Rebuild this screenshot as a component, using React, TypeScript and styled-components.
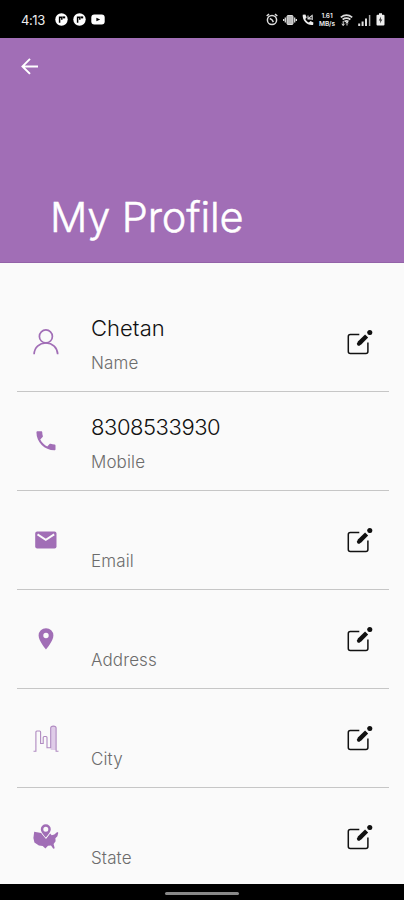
import React from "react";
import styled, { createGlobalStyle } from "styled-components";

const PURPLE = "#a16eb6";

const GlobalStyle = createGlobalStyle`
  * { box-sizing: border-box; }
  body { margin: 0; background: #fafafa; font-family: Inter, Roboto, sans-serif; }
  svg { display: block; flex: none; }
`;

const Screen = styled.div`
  width: 404px;
  height: 900px;
  display: flex;
  flex-direction: column;
  overflow: hidden;
  background: #fafafa;
`;

const StatusBar = styled.div`
  height: 38px;
  flex: none;
  display: flex;
  align-items: center;
  justify-content: space-between;
  padding: 1px 19px 0 21px;
  background: #000;
  color: #eee;
`;

const StatusGroup = styled.div<{ $gap: number }>`
  display: flex;
  align-items: center;
  gap: ${(p) => p.$gap}px;
`;

const Clock = styled.span`
  width: 28px;
  font-size: 13px;
  line-height: 16px;
  letter-spacing: -0.4px;
  white-space: nowrap;
`;

const NetSpeed = styled.span`
  width: 16px;
  display: flex;
  flex-direction: column;
  align-items: center;
  font-size: 6.5px;
  font-weight: 600;
  line-height: 8px;
  letter-spacing: -0.1px;
`;

const Header = styled.header`
  height: 225px;
  flex: none;
  display: flex;
  flex-direction: column;
  justify-content: space-between;
  padding: 18px 20px 20px;
  background: ${PURPLE};
  border-bottom: 1px solid #9362a8;
`;

const BackButton = styled.button`
  width: 20px;
  height: 20px;
  padding: 0;
  border: 0;
  background: none;
  color: #fff;
`;

const Title = styled.h1`
  margin: 0 0 0 30px;
  color: #fff;
  font-size: 41.5px;
  font-weight: 300;
  line-height: 50px;
  letter-spacing: -0.15px;
  -webkit-text-stroke: 0.5px #fff;
`;

const List = styled.main`
  flex: 1;
  min-height: 0;
  padding: 30px 15px 0 17px;
`;

const Row = styled.section<{ $last: boolean }>`
  height: 99px;
  display: flex;
  padding: 0 16px;
  border-bottom: ${(p) => (p.$last ? "0" : "1.5px solid #c6c6c6")};
`;

const IconSlot = styled.div`
  width: 26px;
  height: 98px;
  flex: none;
  display: flex;
  align-items: center;
  color: ${PURPLE};
`;

const Texts = styled.div`
  flex: 1;
  padding: 21px 0 0 32px;
`;

const Value = styled.div<{ $numeric: boolean }>`
  height: 28px;
  color: #111;
  font-size: 22px;
  font-weight: 300;
  line-height: 28px;
  letter-spacing: ${(p) => (p.$numeric ? "-0.45px" : "0.05px")};
  white-space: nowrap;
`;

const Label = styled.div`
  margin-top: 9px;
  color: #6c6c6c;
  font-size: 17px;
  font-weight: 300;
  line-height: 24px;
  letter-spacing: 0.12px;
`;

const EditButton = styled.button`
  width: 26px;
  height: 98px;
  flex: none;
  padding: 0;
  border: 0;
  background: none;
  color: #111;
`;

const NavBar = styled.footer`
  height: 16px;
  flex: none;
  display: flex;
  justify-content: center;
  align-items: center;
  padding-top: 2px;
  background: #000;
`;

const NavHandle = styled.div`
  width: 74px;
  height: 3px;
  border-radius: 1.5px;
  background: #888;
`;

const AppBadge = () => (
  <svg width="13" height="13" viewBox="0 0 13 13">
    <circle cx="6.5" cy="6.5" r="6.2" fill="#fff" />
    <path d="M4.6 9.8V4.2h2.2v2.5" fill="none" stroke="#000" strokeWidth="1.5" />
    <path d="M7.6 3.4h2.6v2H7.6z" />
  </svg>
);

const VideoIcon = () => (
  <svg width="14" height="11" viewBox="0 0 14 11">
    <rect x=".3" y=".5" width="13.4" height="10" rx="3" fill="#fff" />
    <path d="M5.4 3.7l3.8 1.8-3.8 1.8z" fill="#000" />
  </svg>
);

const AlarmIcon = () => (
  <svg width="12" height="13" viewBox="0 0 12 13" fill="none" stroke="#ddd" strokeWidth="1.5">
    <circle cx="6" cy="7" r="4.6" />
    <path d="M.7 3L3 1.1M11.3 3L9 1.1M3.8 5.5l2.1 1.2L7.4 9" />
  </svg>
);

const VibrateIcon = () => (
  <svg width="14" height="12" viewBox="0 0 14 12" fill="#bbb" stroke="#ddd">
    <rect x="4" y="1.5" width="6" height="9" rx="1" />
    <path d="M2.3 3.5v5M11.7 3.5v5M.6 5v2M13.4 5v2" fill="none" strokeWidth="1.3" />
  </svg>
);

const CallIcon = () => (
  <svg width="12" height="12" viewBox="0 0 12 12">
    <path d="M.7.8L3.4.4l1.3 3-1.4 1.5c.8 1.6 2 2.8 3.6 3.6l1.6-1.4 2.9 1.3-.3 2.6C5.6 12 .2 6.8.7.8z" fill="#eee" />
    <path d="M6 4.8L10.7.9M6 1.5v3.4h3.4M10.2 2v4" fill="none" stroke="#ddd" strokeWidth="1.1" />
  </svg>
);

const WifiIcon = () => (
  <svg width="13" height="12" viewBox="0 0 13 12" fill="none" stroke="#ddd" strokeWidth="1.8">
    <path d="M.8 3.4Q6.5-1 12.2 3.4M2.6 5.4q3.9-2.6 7.8 0M4.5 7.5q2-1.3 4 0" />
    <path d="M3.2 7v4.5M1.8 9.8l1.4 1.7 1.3-1.7M7 11.5V8M5.8 9.2L7 7.8l1.2 1.4" strokeWidth="1" />
  </svg>
);

const SignalIcon = () => (
  <svg width="13" height="12" viewBox="0 0 13 12" stroke="#ddd" strokeWidth="2">
    <path d="M1.2 9.5V12M4.6 7.5V12M8 4.5V12" />
    <path d="M11.6 1v11" stroke="#aaa" strokeWidth="1.5" />
  </svg>
);

const BatteryIcon = () => (
  <svg width="9" height="13" viewBox="0 0 9 13">
    <path d="M3 .3h3v1.5h1.5q1 0 1 1v8.7q0 1-1 1h-6q-1 0-1-1V2.8q0-1 1-1H3z" fill="#eee" />
    <path d="M5 3.5L2.8 7.4h1.5L4 10.5l2.3-4H4.8z" fill="#333" />
  </svg>
);

const BackIcon = () => (
  <svg width="20" height="20" viewBox="0 0 20 20" fill="none" stroke="currentColor" strokeWidth="2">
    <path d="M18 10.4H3M10 2.9l-7.5 7.5 7.5 7.5" />
  </svg>
);

const PersonIcon = () => (
  <svg width="26" height="26" viewBox="0 0 26 26" fill="none" stroke="currentColor" strokeWidth="1.7">
    <circle cx="12.9" cy="7.4" r="6.5" />
    <path d="M1.1 25.3C1.3 18.7 6.3 14 12.9 14s11.5 4.7 11.8 11.3" />
  </svg>
);

const PhoneIcon = () => (
  <svg width="26" height="26" viewBox="-.45 -.2 26 26" fill="currentColor">
    <path
      transform="translate(-.2 -.2) scale(1.06)"
      d="M6.62 10.79c1.44 2.83 3.76 5.14 6.59 6.59l2.2-2.2c.27-.27.67-.36 1.02-.24 1.12.37 2.33.57 3.57.57.55 0 1 .45 1 1V20c0 .55-.45 1-1 1-9.39 0-17-7.61-17-17 0-.55.45-1 1-1h3.5c.55 0 1 .45 1 1 0 1.25.2 2.45.57 3.57.11.35.03.74-.25 1.02l-2.2 2.2z"
    />
  </svg>
);

const MailIcon = () => (
  <svg width="26" height="26" viewBox="0 0 26 26">
    <rect x="2.2" y="4.4" width="21.3" height="17.2" rx="2" fill="currentColor" />
    <path d="M4.5 7.4l8.3 5.5 8.4-5.5" fill="none" stroke="#fafafa" strokeWidth="1.9" />
  </svg>
);

const PinIcon = () => (
  <svg width="26" height="26" viewBox="0 0 26 26">
    <path
      fill="currentColor"
      fillRule="evenodd"
      d="M13 2.2a7.4 7.4 0 0 0-7.4 7.4C5.6 15.1 13 23.4 13 23.4s7.4-8.3 7.4-13.8A7.4 7.4 0 0 0 13 2.2zm0 10a2.7 2.7 0 1 1 0-5.4 2.7 2.7 0 0 1 0 5.4z"
    />
  </svg>
);

const CityIcon = () => (
  <svg width="26" height="27" viewBox="0 0 26 27" fill="none" stroke="#b08ac1" strokeWidth="1.1">
    <path d="M17.7 25V3.1q0-2 2.7-2t2.7 2V25z" fill="#dfcce8" stroke="none" />
    <path d="M.5 26.3h2.4V7q0-1 1-1h2.7q1 0 1 1v11.5h2.6v-6q0-1 1-1H13q1 0 1 1v10.2h3.7V3.1q0-2 2.7-2t2.7 2v23.2h2.4" />
  </svg>
);

const StateIcon = () => (
  <svg width="26" height="26" viewBox="0 0 26 26">
    <path
      fill="currentColor"
      d="M1.2 7.8l7 1.1L13 15l4.1-5.4 1.6 1.6 2.6-.7L24.2 8l1.1.7-.9 3.5-2 2.1.2 2.9-2 2.7 1.1 4.3-1.4.5-2.3-3.1-3 .2-2.6 2.7-2.7-2.5-3.8-.5-4.5-3L.4 14z"
    />
    <path
      d="M12.8 1.1a4.2 4.2 0 0 0-4.2 4.2c0 2.8 4.2 7.2 4.2 7.2S17 8.1 17 5.3a4.2 4.2 0 0 0-4.2-4.2z"
      fill="#fafafa"
      stroke="#fafafa"
      strokeWidth="2.4"
    />
    <path
      fill="currentColor"
      fillRule="evenodd"
      d="M12.8.2a5 5 0 0 0-5 5c0 3.2 5 8.3 5 8.3s5-5.1 5-8.3a5 5 0 0 0-5-5zm0 7.6a2.5 2.5 0 1 1 0-5 2.5 2.5 0 0 1 0 5z"
    />
  </svg>
);

const EditIcon = () => (
  <svg width="26" height="26" viewBox="0 0 26 26" fill="none" stroke="currentColor">
    <path d="M12.3 5.4H3.3q-2 0-2 2v15q0 2 2 2h15.6q2 0 2-2V13.5" strokeWidth="1.5" />
    <path d="M12.2 14.4L19.6 7" strokeWidth="4.4" />
    <path d="M12.2 14.4L11.8 14.8" strokeWidth="3.8" strokeLinecap="round" />
    <circle cx="22.8" cy="3.4" r="2.5" fill="currentColor" stroke="none" />
    <path d="M20.2 3.2l1.6-1.4 2.6 2.6-1.4 1.6z" fill="currentColor" stroke="none" />
  </svg>
);

const fields = [
  { label: "Name", value: "Chetan", numeric: false, icon: <PersonIcon />, editable: true },
  { label: "Mobile", value: "8308533930", numeric: true, icon: <PhoneIcon />, editable: false },
  { label: "Email", value: "", numeric: false, icon: <MailIcon />, editable: true },
  { label: "Address", value: "", numeric: false, icon: <PinIcon />, editable: true },
  { label: "City", value: "", numeric: false, icon: <CityIcon />, editable: true },
  { label: "State", value: "", numeric: false, icon: <StateIcon />, editable: true },
];

export default function App() {
  return (
    <>
      <GlobalStyle />
      <Screen>
        <StatusBar>
          <StatusGroup $gap={6}>
            <Clock>4:13</Clock>
            <StatusGroup $gap={5}>
              <AppBadge />
              <AppBadge />
              <VideoIcon />
            </StatusGroup>
          </StatusGroup>
          <StatusGroup $gap={5}>
            <AlarmIcon />
            <VibrateIcon />
            <CallIcon />
            <NetSpeed>
              <span>1.61</span>
              <span>MB/s</span>
            </NetSpeed>
            <WifiIcon />
            <SignalIcon />
            <BatteryIcon />
          </StatusGroup>
        </StatusBar>
        <Header>
          <BackButton aria-label="Back">
            <BackIcon />
          </BackButton>
          <Title>My Profile</Title>
        </Header>
        <List>
          {fields.map((field, i) => (
            <Row key={field.label} $last={i === fields.length - 1}>
              <IconSlot>{field.icon}</IconSlot>
              <Texts>
                <Value $numeric={field.numeric}>{field.value}</Value>
                <Label>{field.label}</Label>
              </Texts>
              {field.editable && (
                <EditButton aria-label={`Edit ${field.label}`}>
                  <EditIcon />
                </EditButton>
              )}
            </Row>
          ))}
        </List>
        <NavBar>
          <NavHandle />
        </NavBar>
      </Screen>
    </>
  );
}
